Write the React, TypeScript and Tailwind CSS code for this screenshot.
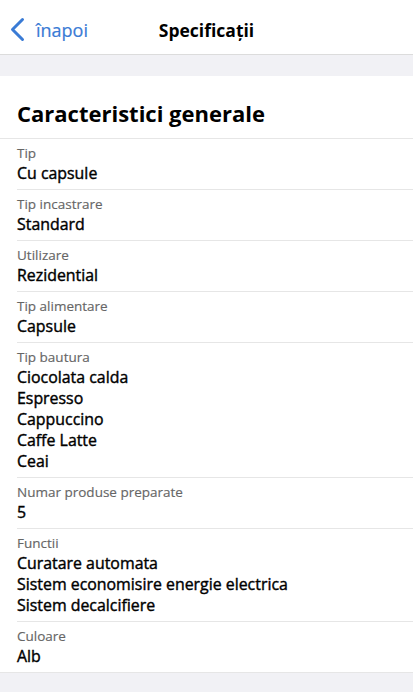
const specs: { label: string; values: string[] }[] = [
  { label: "Tip", values: ["Cu capsule"] },
  { label: "Tip incastrare", values: ["Standard"] },
  { label: "Utilizare", values: ["Rezidential"] },
  { label: "Tip alimentare", values: ["Capsule"] },
  {
    label: "Tip bautura",
    values: ["Ciocolata calda", "Espresso", "Cappuccino", "Caffe Latte", "Ceai"],
  },
  { label: "Numar produse preparate", values: ["5"] },
  {
    label: "Functii",
    values: ["Curatare automata", "Sistem economisire energie electrica", "Sistem decalcifiere"],
  },
  { label: "Culoare", values: ["Alb"] },
];

function SpecRow({ label, values, last }: { label: string; values: string[]; last: boolean }) {
  return (
    <div className="pl-[17px]">
      <div className={`py-[5px] ${last ? "" : "border-b border-[#e6e6e6]"}`}>
        <div className="text-[13.5px] leading-[19px] text-[#666666] [-webkit-text-stroke:0.15px_#666666]">{label}</div>
        {values.map((v) => (
          <div key={v} className="text-[15.9px] leading-[21px] text-black [-webkit-text-stroke:0.4px_#000]">
            {v}
          </div>
        ))}
      </div>
    </div>
  );
}

export default function App() {
  return (
    <div className="w-[413px] h-[699px] bg-white font-['Open_Sans',sans-serif] overflow-hidden">
      <header className="relative h-[55px] border-b border-[#dcdcdc] flex items-center justify-center">
        <button className="absolute left-[9px] top-[17px] flex items-center gap-[10px] text-[#3a7bd5]">
          <svg width="17" height="25" viewBox="0 0 17 25" fill="none">
            <path d="M13.5 2.5 L3.5 12.5 L13.5 22.5" stroke="currentColor" strokeWidth="3" strokeLinecap="round" strokeLinejoin="round" />
          </svg>
          <span className="text-[18px] leading-[24px] [-webkit-text-stroke:0.2px_#3a7bd5]">înapoi</span>
        </button>
        <h1 className="text-[17.5px] font-bold text-black mt-[6px]">Specificații</h1>
      </header>
      <div className="h-[21px] bg-[#f1f1f5]" />
      <section className="bg-white">
        <h2 className="px-[17px] h-[63px] flex items-center text-[22px] font-bold text-black border-b border-[#e6e6e6] pt-[12px]">
          Caracteristici generale
        </h2>
        {specs.map((s, i) => (
          <SpecRow key={s.label} label={s.label} values={s.values} last={i === specs.length - 1} />
        ))}
      </section>
      <div className="h-[20px] bg-[#f1f1f5] border-t border-[#e6e6e6]" />
    </div>
  );
}
